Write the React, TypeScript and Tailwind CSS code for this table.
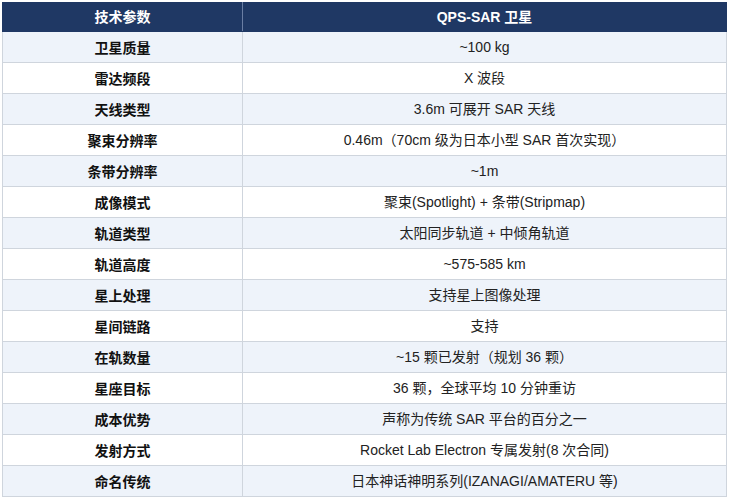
import React from "react";

const ROWS: [string, string][] = [
  ["卫星质量", "~100 kg"],
  ["雷达频段", "X 波段"],
  ["天线类型", "3.6m 可展开 SAR 天线"],
  ["聚束分辨率", "0.46m（70cm 级为日本小型 SAR 首次实现）"],
  ["条带分辨率", "~1m"],
  ["成像模式", "聚束(Spotlight) + 条带(Stripmap)"],
  ["轨道类型", "太阳同步轨道 + 中倾角轨道"],
  ["轨道高度", "~575-585 km"],
  ["星上处理", "支持星上图像处理"],
  ["星间链路", "支持"],
  ["在轨数量", "~15 颗已发射（规划 36 颗）"],
  ["星座目标", "36 颗，全球平均 10 分钟重访"],
  ["成本优势", "声称为传统 SAR 平台的百分之一"],
  ["发射方式", "Rocket Lab Electron 专属发射(8 次合同)"],
  ["命名传统", "日本神话神明系列(IZANAGI/AMATERU 等)"],
];

export default function App() {
  return (
    <div className="w-[730px] h-[498px] bg-white pt-[2px] pl-[2px] font-['Liberation_Sans','Noto_Sans_CJK_SC',sans-serif]">
      <table className="w-[725px] border-collapse table-fixed">
        <colgroup>
          <col className="w-[240px]" />
          <col />
        </colgroup>
        <thead>
          <tr className="h-[29px] bg-[#1f3864] text-white text-[14px] font-bold">
            <th className="border border-[#1f3864] border-r-[#6a7ea3] text-center">技术参数</th>
            <th className="border border-[#1f3864] text-center">QPS-SAR 卫星</th>
          </tr>
        </thead>
        <tbody>
          {ROWS.map(([k, v], i) => (
            <tr key={k} className={`h-[31px] ${i % 2 === 0 ? "bg-[#eef3fa]" : "bg-white"}`}>
              <td className="border border-[#cfd5dd] text-center text-[14px] font-bold text-[#111] font-['Noto_Sans_CJK_SC',sans-serif]">
                {k}
              </td>
              <td className="border border-[#cfd5dd] text-center text-[14px] text-[#222]">{v}</td>
            </tr>
          ))}
        </tbody>
      </table>
    </div>
  );
}
